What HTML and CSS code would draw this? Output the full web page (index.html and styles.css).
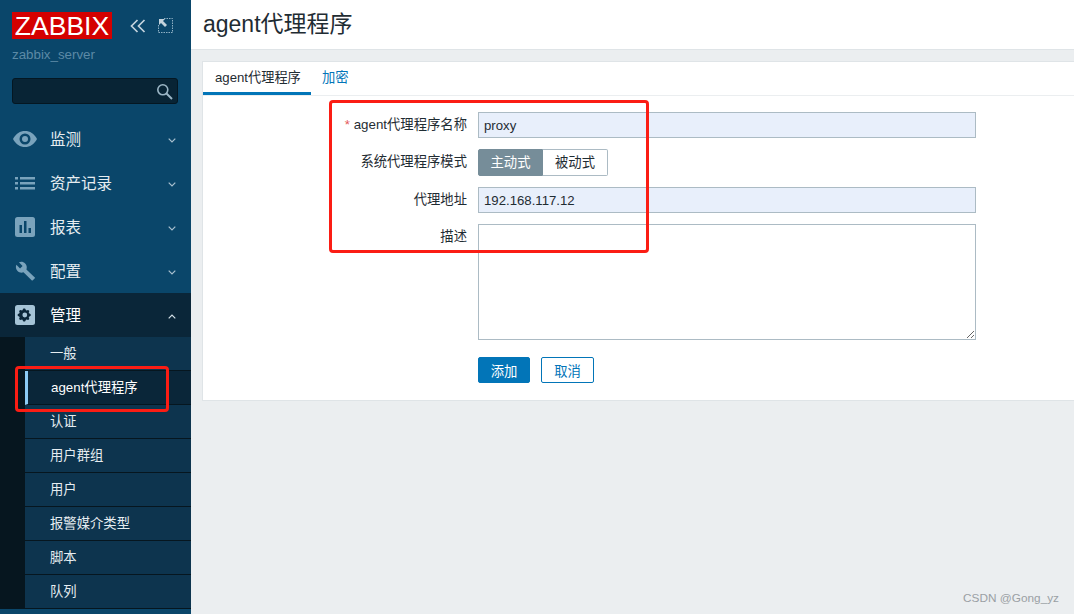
FILE: index.html
```html
<!DOCTYPE html>
<html lang="zh">
<head>
<meta charset="utf-8">
<title>agent代理程序</title>
<link rel="stylesheet" href="styles.css">
</head>
<body>
<div class="app">
  <aside class="sidebar">
    <div class="brand">
      <div class="logo">ZABBIX</div>
      <svg class="collapse" width="16" height="14" viewBox="0 0 16 14"><path d="M7.500 1 1.500 7l6 6M14.500 1l-6 6 6 6" fill="none" stroke="#c3d3dd" stroke-width="1.700"/></svg>
      <svg class="expand" width="15" height="15" viewBox="0 0 15 15"><path d="M6 .5h8.500V14.500H.5V6" fill="none" stroke="#8fb0c4" stroke-width="1" stroke-dasharray="1.500 1"/><path d="M1 1h6L5 3l4 4-2 2-4-4-2 2z" fill="#c3d3dd"/></svg>
    </div>
    <div class="server">zabbix_server</div>
    <div class="search">
      <svg width="17" height="17" viewBox="0 0 17 17"><circle cx="6.800" cy="6.800" r="5" fill="none" stroke="#9bb6c6" stroke-width="1.600"/><path d="m10.500 10.500 5.500 5.500" stroke="#9bb6c6" stroke-width="2"/></svg>
    </div>
    <nav class="menu">
      <div class="menu-item">
        <svg class="icon" width="24" height="24" viewBox="0 0 24 24"><path d="M0 12C3 6.500 7 4 12 4s9 2.500 12 8c-3 5.500-7 8-12 8S3 17.500 0 12z" fill="#7aa3bc"/><circle cx="12" cy="12" r="5.500" fill="#0a466a"/><circle cx="12" cy="12" r="3" fill="#7aa3bc"/></svg>
        <span>监测</span>
        <svg class="chev" width="8" height="5" viewBox="0 0 8 5"><path d="m.7.7 3.300 3.300L7.300.7" fill="none" stroke="#a9c0cf" stroke-width="1.200"/></svg>
      </div>
      <div class="menu-item">
        <svg class="icon" width="24" height="24" viewBox="0 0 24 24"><path d="M2 6h3v2.500H2zM2 11h3v2.500H2zM2 16h3v2.500H2zM7 6h15v2.500H7zM7 11h15v2.500H7zM7 16h15v2.500H7z" fill="#7aa3bc"/></svg>
        <span>资产记录</span>
        <svg class="chev" width="8" height="5" viewBox="0 0 8 5"><path d="m.7.7 3.300 3.300L7.300.7" fill="none" stroke="#a9c0cf" stroke-width="1.200"/></svg>
      </div>
      <div class="menu-item">
        <svg class="icon" width="24" height="24" viewBox="0 0 24 24"><rect x="2" y="2" width="20" height="20" rx="2.500" fill="#7aa3bc"/><path d="M6.500 10h2.500v8H6.500zM11 6h2.500v12H11zM15.500 13H18v5h-2.500z" fill="#0a466a"/></svg>
        <span>报表</span>
        <svg class="chev" width="8" height="5" viewBox="0 0 8 5"><path d="m.7.7 3.300 3.300L7.300.7" fill="none" stroke="#a9c0cf" stroke-width="1.200"/></svg>
      </div>
      <div class="menu-item">
        <svg class="icon" width="24" height="24" viewBox="0 0 24 24"><path transform="translate(2.500 2) scale(.84)" d="M23 19.500 13 10c.9-2.400.4-5.200-1.500-7.100C9.500.9 6.500.5 4.100 1.600l4.300 4.300-3 3L1.100 4.600c-1.200 2.400-.7 5.400 1.300 7.400 1.900 1.900 4.700 2.400 7.100 1.500l9.700 9.500c.4.400 1 .400 1.400 0l2.400-2.600c.5-.3.500-.7 0-.9z" fill="#7aa3bc"/></svg>
        <span>配置</span>
        <svg class="chev" width="8" height="5" viewBox="0 0 8 5"><path d="m.7.7 3.300 3.300L7.300.7" fill="none" stroke="#a9c0cf" stroke-width="1.200"/></svg>
      </div>
      <div class="menu-item active">
        <svg class="icon" width="24" height="24" viewBox="0 0 24 24"><rect x="2" y="2" width="20" height="20" rx="2.500" fill="#a5c3d6"/><path d="M12 5.500l1.200 2 2-.6 1.100 1.100-.6 2 2 1.200v1.600l-2 1.200.6 2-1.100 1.100-2-.6-1.200 2h-1.600l-1.200-2-2 .6-1.100-1.100.6-2-2-1.200v-1.600l2-1.200-.6-2 1.100-1.100 2 .6 1.200-2z" fill="#0a2639"/><circle cx="11.800" cy="12" r="2.400" fill="#a5c3d6"/></svg>
        <span>管理</span>
        <svg class="chev" width="8" height="5" viewBox="0 0 8 5"><path d="M.7 4.300 4 1l3.300 3.300" fill="none" stroke="#d5e1e8" stroke-width="1.200"/></svg>
      </div>
      <ul class="submenu">
        <li>一般</li>
        <li class="current">agent代理程序</li>
        <li>认证</li>
        <li>用户群组</li>
        <li>用户</li>
        <li>报警媒介类型</li>
        <li>脚本</li>
        <li>队列</li>
      </ul>
    </nav>
  </aside>
  <main class="main">
    <header class="header"><h1>agent代理程序</h1></header>
    <section class="card">
      <div class="tabs">
        <div class="tab selected">agent代理程序</div>
        <div class="tab">加密</div>
      </div>
      <form class="form">
        <label class="label"><span class="req">*</span> agent代理程序名称</label>
        <div class="field filled">proxy</div>
        <label class="label">系统代理程序模式</label>
        <div class="toggle"><span class="on">主动式</span><span class="off">被动式</span></div>
        <label class="label">代理地址</label>
        <div class="field filled">192.168.117.12</div>
        <label class="label">描述</label>
        <textarea class="area"></textarea>
        <div class="actions">
          <button type="button" class="btn primary">添加</button>
          <button type="button" class="btn ghost">取消</button>
        </div>
      </form>
    </section>
  </main>
</div>
<div class="mark mark-form"></div>
<div class="mark mark-nav"></div>
<div class="watermark">CSDN @Gong_yz</div>
</body>
</html>
```
FILE: styles.css
```css
* { box-sizing: border-box; }
html, body { margin: 0; height: 100%; overflow: hidden; }
body {
  font-family: "Liberation Sans", "Noto Sans CJK SC", sans-serif;
  font-size: 13.330px;
  color: #1f2c33;
  background: #ebeef0;
}
.app { display: flex; height: 614px; }

.sidebar { width: 191px; flex: none; background: #0a466a; color: #f2f5f7; }
.brand { display: flex; align-items: center; padding: 12px 0 0 12px; height: 39px; }
.logo {
  width: 100px; height: 27px; background: #d40000; color: #fff;
  font-size: 26.500px; line-height: 28px; text-align: center;
}
.collapse { margin-left: 18px; }
.expand { margin-left: 12px; }
.server { margin: 8px 0 0 12px; color: #5c8aa6; line-height: 15px; }
.search {
  margin: 16px 12px 0; width: 166px; height: 26px; background: #082435;
  border: 1px solid #041722; border-radius: 3px;
  display: flex; align-items: center; justify-content: flex-end; padding-right: 4px;
}
.menu { margin-top: 13px; }
.menu-item {
  display: flex; align-items: center; height: 44px; padding-left: 13px;
  font-size: 15.500px; color: #e6edf1;
}
.menu-item span { margin-left: 13px; flex: 1; padding-bottom: 2px; }
.menu-item .chev { margin: 2px 15px 0 0; }
.menu-item.active { background: #0a2639; color: #fff; }
.submenu { list-style: none; margin: 0; padding: 0 0 0 25px; background: #06161f; }
.submenu li {
  height: 34px; line-height: 33px; padding-left: 25px; background: #0d344e;
  border-bottom: 1px solid #06161f; color: #e6edf1;
}
.submenu li.current {
  background: #0a2639; color: #fff;
  padding-left: 23px; border-left: 3px solid #8ccbf5;
}

.main { flex: 1; min-width: 0; }
.header { height: 50px; background: #fff; border-bottom: 1px solid #dfe4e7; padding-left: 12px; }
.header h1 { margin: 0; font-size: 23px; line-height: 48px; font-weight: 400; color: #1f2c33; }
.card {
  margin: 11px 0 0 11px; height: 340px; background: #fff;
  border: 1px solid #dfe4e7; border-right: 0;
}
.tabs { display: flex; height: 34px; border-bottom: 1px solid #ebeef0; }
.tab {
  height: 33px; padding: 0 11px; line-height: 31px; color: #0275b8;
  border-bottom: 2px solid transparent;
}
.tab.selected { color: #1f2c33; border-bottom: 3px solid #0275b8; width: 108px; padding-left: 12px; white-space: nowrap; font-size: 13.200px; }
.form {
  display: grid; grid-template-columns: 264px 498px; column-gap: 11px; row-gap: 11px;
  padding-top: 16px; align-items: start;
}
.label { text-align: right; line-height: 26px; color: #1f2c33; }
.req { color: #e45959; }
.field {
  height: 26px; line-height: 25px; padding-left: 5px; font-size: 13.200px; color: #1f2c33;
  background: #e8effb; border: 1px solid #acbbc4;
}
.toggle { display: flex; height: 27px; }
.toggle span { display: block; width: 65px; line-height: 25px; text-align: center; }
.toggle .on { background: #768d99; color: #fff; border: 1px solid #768d99; border-radius: 2px 0 0 2px; }
.toggle .off { border: 1px solid #acbbc4; border-left: 0; border-radius: 0 2px 2px 0; color: #1f2c33; }
.area {
  display: block; width: 498px; height: 116px; margin: 0; background: #fff;
  border: 1px solid #acbbc4; border-radius: 0;
}
.actions { grid-column: 2; display: flex; gap: 11px; margin-top: 6px; }
.btn {
  height: 26px; padding: 0; font-family: inherit; font-size: 13.330px; border-radius: 2px;
  border: 1px solid #0275b8;
}
.primary { width: 52px; background: #0275b8; color: #fff; }
.ghost { width: 53px; background: #fff; color: #0275b8; }

.mark { position: absolute; border: 3px solid #fb1d14; border-radius: 4px; pointer-events: none; }
.mark-form { left: 329px; top: 100px; width: 320px; height: 153px; }
.mark-nav { left: 15px; top: 366px; width: 154px; height: 46px; }
.watermark { position: absolute; right: 15px; top: 590px; font-size: 11.800px; line-height: 16px; color: #9aa0a4; }
```
